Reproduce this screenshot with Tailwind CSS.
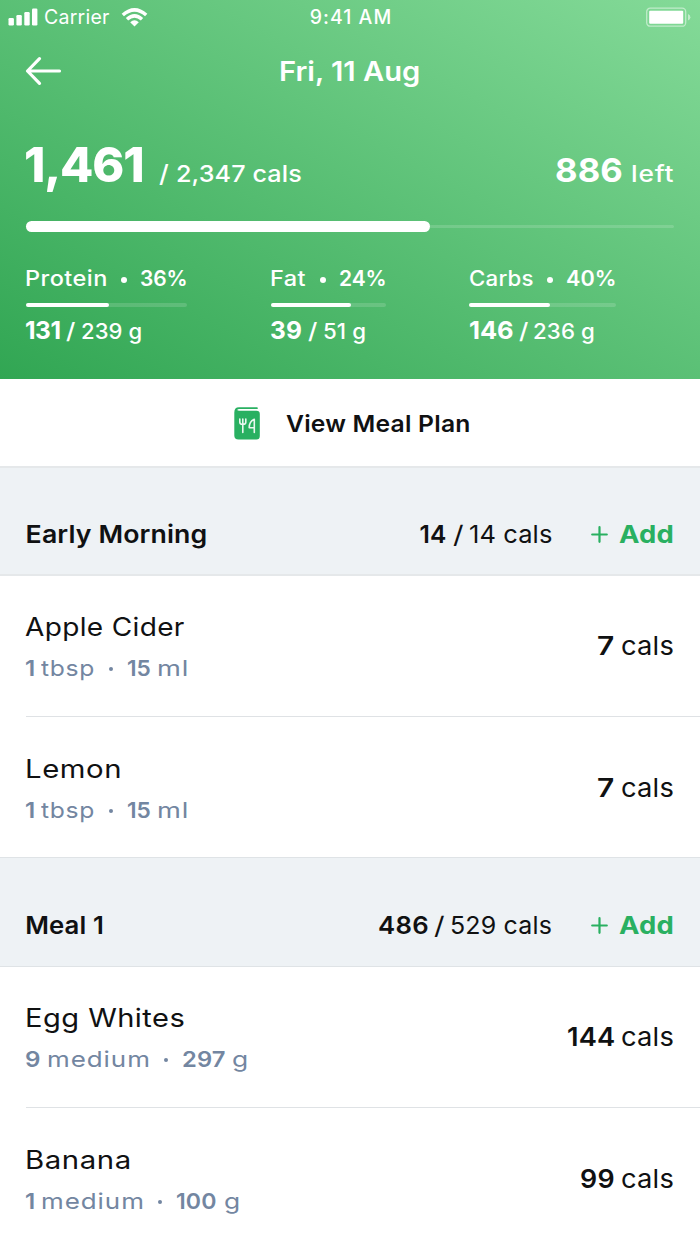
<!DOCTYPE html>
<html lang="en">
<head>
<meta charset="utf-8">
<title>Food diary</title>
<script src="https://cdn.jsdelivr.net/npm/@tailwindcss/browser@4"></script>
</head>
<body class="bg-white">
<main class="w-[700px] h-[1244px] overflow-hidden bg-white text-[#101112] whitespace-nowrap font-['Inter',sans-serif] [&_span]:block [&_span]:shrink-0 [&_span]:origin-left">

  <header class="h-[379px] flex flex-col text-white bg-[linear-gradient(to_top_right,#31a653,#84da98)]">
    <!-- Status bar -->
    <div class="h-[34px] grid grid-cols-3 items-center text-[19.5px] leading-[34px]">
      <div class="flex items-center pl-2">
        <svg class="w-[30px] h-[18px]" viewBox="0 0 30 18" fill="#fff"><rect x=".5" y="10" width="5.400" height="7.500" rx="1.200"/><rect x="8.400" y="7" width="5.400" height="10.500" rx="1.200"/><rect x="16.300" y="4" width="5.400" height="13.500" rx="1.200"/><rect x="24" y=".5" width="5.400" height="17" rx="1.200"/></svg>
        <span class="ml-1.5 w-[77px] tracking-[.24px]">Carrier</span>
        <svg class="w-[27px] h-[19px]" viewBox="0 0 27 19" fill="none" stroke="#fff" stroke-width="3.500"><path d="M1.800 7Q13.500-3.200 25.200 7"/><path d="M6 11.300Q13.500 4.600 21 11.300"/><path d="M13.500 18.500 9.200 14.200Q13.500 10.400 17.800 14.200Z" fill="#fff" stroke="none"/></svg>
      </div>
      <span class="text-center font-medium tracking-[1px] pl-[2px]">9:41 AM</span>
      <div class="flex justify-end pr-[9px]">
        <svg class="w-[46px] h-[20px]" viewBox="0 0 46 20"><rect x="1.700" y="1.200" width="39" height="18" rx="3.500" fill="none" stroke="#fff" stroke-opacity=".5" stroke-width="1.300"/><rect x="4.200" y="3.700" width="34" height="13" rx="1" fill="#fff"/><path d="M43 7q2.400 1 2.400 3.300T43 13.500Z" fill="#fff" fill-opacity=".5"/></svg>
      </div>
    </div>
    <!-- Navigation -->
    <div class="h-[75px] flex items-center pl-[25px]">
      <svg class="w-[37px] h-[30px] -mt-[2px]" viewBox="0 0 37 30" fill="none" stroke="#fff" stroke-width="3.200" stroke-linecap="round" stroke-linejoin="round"><path d="M34.500 15H2.500M14.500 2.700 2.500 15l12 12.300"/></svg>
      <span class="ml-[217px] mt-px text-[27px] leading-[40px] font-semibold tracking-[0px] scale-x-[1.08]">Fri, 11 Aug</span>
    </div>
    <!-- Calories -->
    <div class="mt-[26px] h-[60px] flex items-baseline pl-6 leading-[60px]">
      <span class="w-[135px] text-[48.5px] font-extrabold tracking-[-1.200px]">1,461</span>
      <span class="w-[16.500px] text-[24px] font-medium scale-x-[1.1]">/</span>
      <span class="w-[379.500px] text-[23.5px] font-medium tracking-[.1px] scale-x-[1.07]">2,347 cals</span>
      <span class="w-[76px] text-[33px] font-bold tracking-[.1px] scale-x-[1.05]">886</span>
      <span class="text-[23.5px] font-medium tracking-[.7px] scale-x-[1.12]">left</span>
    </div>
    <div class="mt-[26px] ml-[25.500px] w-[648.500px] h-[10.500px] flex items-center">
      <div class="w-[404px] h-full rounded-full bg-white"></div>
      <div class="flex-1 h-[3px] rounded-r-full bg-white/15"></div>
    </div>
    <!-- Macros -->
    <div class="mt-[31.500px] flex text-[21px] leading-[30px] font-medium">
      <section class="w-[245px] pl-[25px]">
        <div class="flex items-baseline pt-px h-[30px]"><span class="w-[96px] tracking-[.4px] scale-x-[1.12]">Protein</span><i class="block size-1.5 rounded-full bg-white -translate-y-[3px] mr-[13px]"></i><span class="font-semibold tracking-[-.1px]">36%</span></div>
        <div class="mt-2.5 ml-[.5px] w-[161.500px] h-1 rounded-full bg-white/15"><div class="w-[83px] h-full rounded-full bg-white"></div></div>
        <div class="mt-2 flex items-baseline"><span class="w-[41px] text-[24.500px] font-bold tracking-[-.500px]">131</span><span class="w-[15px] text-[22px] scale-x-[1.15]">/</span><span class="tracking-[.1px] scale-x-[1.05]">239 g</span></div>
      </section>
      <section class="w-[198.500px] pl-[25px]">
        <div class="flex items-baseline pt-px h-[30px]"><span class="w-[50px] tracking-[.4px] scale-x-[1.12]">Fat</span><i class="block size-1.5 rounded-full bg-white -translate-y-[3px] mr-[13px]"></i><span class="font-semibold tracking-[-.1px]">24%</span></div>
        <div class="mt-2.5 ml-[.5px] w-[115.500px] h-1 rounded-full bg-white/15"><div class="w-[80px] h-full rounded-full bg-white"></div></div>
        <div class="mt-2 flex items-baseline"><span class="w-[37.500px] text-[24.500px] font-bold tracking-[.1px]">39</span><span class="w-[15px] text-[22px] scale-x-[1.15]">/</span><span class="tracking-[.1px] scale-x-[1.06]">51 g</span></div>
      </section>
      <section class="pl-[25px]">
        <div class="flex items-baseline pt-px h-[30px]"><span class="w-[78px] tracking-[.2px] scale-x-[1.06]">Carbs</span><i class="block size-1.5 rounded-full bg-white -translate-y-[3px] mr-[13px]"></i><span class="font-semibold tracking-[0px] scale-x-[1.03]">40%</span></div>
        <div class="mt-2.5 ml-[.5px] w-[147px] h-1 rounded-full bg-white/15"><div class="w-[81px] h-full rounded-full bg-white"></div></div>
        <div class="mt-2 flex items-baseline"><span class="w-[50px] text-[24.500px] font-bold tracking-[-.1px] scale-x-[1.04]">146</span><span class="w-[14px] text-[22px] scale-x-[1.15]">/</span><span class="tracking-[.1px] scale-x-[1.06]">236 g</span></div>
      </section>
    </div>
  </header>

  <!-- Meal plan link -->
  <div class="h-[89px] border-b-2 border-[#e5e8ea] flex items-center pl-[234px] pt-[1px]">
    <svg class="w-[26px] h-[33px]" viewBox="0 0 26 33"><path d="M.3 5.500Q.3.300 5 .3H23q.8 0 .8.900t-.8.900H5.500q-2.200 0-2.200.8t2.200.8H22.500q3.300 0 3.300 3.200V29q0 3.500-3.400 3.500H4.500Q.3 32.500.3 28.500Z" fill="#29b061"/><path d="M5.800 12v3.300q0 2.200 3 2.200t3-2.200V12M8.800 12v13.500M20.300 25.500V12.200q-5.300 2.500-5.100 8.600h5.100" fill="none" stroke="#e9f7ef" stroke-width="1.600" stroke-linecap="round" stroke-linejoin="round"/></svg>
    <span class="ml-[25.500px] mt-[2px] text-[23.500px] leading-[32px] font-semibold tracking-[.2px] scale-x-[1.05]">View Meal Plan</span>
  </div>

  <!-- Early Morning -->
  <div class="h-[108px] border-b-2 border-[#e5e8ea] bg-[#eef2f5] flex items-baseline pt-[51px] text-[24.500px] leading-[30px]">
    <span class="w-[419.500px] pl-[23.500px] font-semibold tracking-[.1px] scale-x-[1.09]">Early Morning</span>
    <span class="w-[33.500px] font-semibold tracking-[.2px]">14</span>
    <span class="w-4 scale-x-[1.2]">/</span>
    <span class="w-[122px] tracking-[.1px] scale-x-[1.04]">14 cals</span>
    <svg class="w-[17px] h-[17px] mr-[10.500px]" viewBox="0 0 17 17" stroke="#29b061" stroke-width="2.200" stroke-linecap="round"><path d="M1.200 8.500h14.600M8.500 1.200v14.600"/></svg>
    <span class="font-bold text-[#29b061] tracking-[.2px] scale-x-[1.12]">Add</span>
  </div>
  <div class="h-[140px] flex pt-[35px]">
    <div class="flex-1 pl-[25px]">
      <span class="text-[25.500px] leading-[32px] tracking-[.3px] scale-x-[1.1]">Apple Cider</span>
      <div class="mt-[10px] flex items-baseline text-[22px] leading-[30px] text-[#7386a1]"><span class="w-[16px] font-semibold scale-x-[1.1]">1</span><span class="w-[68px] tracking-[.6px] scale-x-[1.12]">tbsp</span><i class="block size-1 rounded-full bg-[#7386a1] -translate-y-[5px] mr-3.5"></i><span class="w-[29.500px] font-semibold tracking-[-.2px] scale-x-[1.03]">15</span><span class="tracking-[.700px] scale-x-[1.24]">ml</span></div>
    </div>
    <div class="mt-[19px] mr-[26px] h-8 flex items-baseline text-[26px] leading-[32px]"><span class="w-[24px] font-semibold scale-x-[1.15]">7</span><span class="w-[53px] tracking-[.2px] scale-x-[1.05]">cals</span></div>
  </div>
  <div class="ml-[25.500px] h-px bg-[#dfe2e5]"></div>
  <div class="h-[140px] flex pt-[36px]">
    <div class="flex-1 pl-[24.500px]">
      <span class="text-[25.500px] leading-[32px] tracking-[.500px] scale-x-[1.15]">Lemon</span>
      <div class="mt-[10px] ml-[.5px] flex items-baseline text-[22px] leading-[30px] text-[#7386a1]"><span class="w-[16px] font-semibold scale-x-[1.1]">1</span><span class="w-[68px] tracking-[.6px] scale-x-[1.12]">tbsp</span><i class="block size-1 rounded-full bg-[#7386a1] -translate-y-[5px] mr-3.5"></i><span class="w-[29.500px] font-semibold tracking-[-.2px] scale-x-[1.03]">15</span><span class="tracking-[.700px] scale-x-[1.24]">ml</span></div>
    </div>
    <div class="mt-[19px] mr-[26px] h-8 flex items-baseline text-[26px] leading-[32px]"><span class="w-[24px] font-semibold scale-x-[1.15]">7</span><span class="w-[53px] tracking-[.2px] scale-x-[1.05]">cals</span></div>
  </div>

  <!-- Meal 1 -->
  <div class="h-[110px] border-y border-[#dfe3e6] bg-[#eef2f5] flex items-baseline pt-[52px] text-[24.500px] leading-[30px]">
    <span class="w-[378px] pl-[24px] font-semibold tracking-[.1px] scale-x-[1.05]">Meal 1</span>
    <span class="w-[56px] font-semibold tracking-[.25px] scale-x-[1.05]">486</span>
    <span class="w-4 scale-x-[1.2]">/</span>
    <span class="w-[141px] tracking-[.15px] scale-x-[1.02]">529 cals</span>
    <svg class="w-[17px] h-[17px] mr-[10.500px]" viewBox="0 0 17 17" stroke="#29b061" stroke-width="2.200" stroke-linecap="round"><path d="M1.200 8.500h14.600M8.500 1.200v14.600"/></svg>
    <span class="font-bold text-[#29b061] tracking-[.2px] scale-x-[1.12]">Add</span>
  </div>
  <div class="h-[140px] flex pt-[35px]">
    <div class="flex-1 pl-[24.500px]">
      <span class="text-[25.500px] leading-[32px] tracking-[.4px] scale-x-[1.14]">Egg Whites</span>
      <div class="mt-[10px] ml-[.5px] flex items-baseline text-[22px] leading-[30px] text-[#7386a1]"><span class="w-[22px] font-semibold scale-x-[1.1]">9</span><span class="w-[117px] tracking-[.800px] scale-x-[1.18]">medium</span><i class="block size-1 rounded-full bg-[#7386a1] -translate-y-[5px] mr-3.5"></i><span class="w-[49.500px] font-semibold tracking-[.1px] scale-x-[1.08]">297</span><span class="scale-x-[1.2]">g</span></div>
    </div>
    <div class="mt-[19px] mr-[26px] h-8 flex items-baseline text-[26px] leading-[32px]"><span class="w-[54.500px] font-semibold tracking-[.1px] scale-x-[1.05]">144</span><span class="w-[53px] tracking-[.2px] scale-x-[1.05]">cals</span></div>
  </div>
  <div class="ml-[25.500px] h-px bg-[#dfe2e5]"></div>
  <div class="h-[136px] flex pt-[36px]">
    <div class="flex-1 pl-[24.500px]">
      <span class="text-[25.500px] leading-[32px] tracking-[.500px] scale-x-[1.15]">Banana</span>
      <div class="mt-[10px] ml-[.5px] flex items-baseline text-[22px] leading-[30px] text-[#7386a1]"><span class="w-[16px] font-semibold scale-x-[1.1]">1</span><span class="w-[117px] tracking-[.800px] scale-x-[1.18]">medium</span><i class="block size-1 rounded-full bg-[#7386a1] -translate-y-[5px] mr-3.5"></i><span class="w-[47.500px] font-semibold tracking-[.1px] scale-x-[1.05]">100</span><span class="scale-x-[1.2]">g</span></div>
    </div>
    <div class="mt-[19px] mr-[26px] h-8 flex items-baseline text-[26px] leading-[32px]"><span class="w-[41px] font-semibold tracking-[.4px] scale-x-[1.03]">99</span><span class="w-[53px] tracking-[.2px] scale-x-[1.05]">cals</span></div>
  </div>
</main>
</body>
</html>
